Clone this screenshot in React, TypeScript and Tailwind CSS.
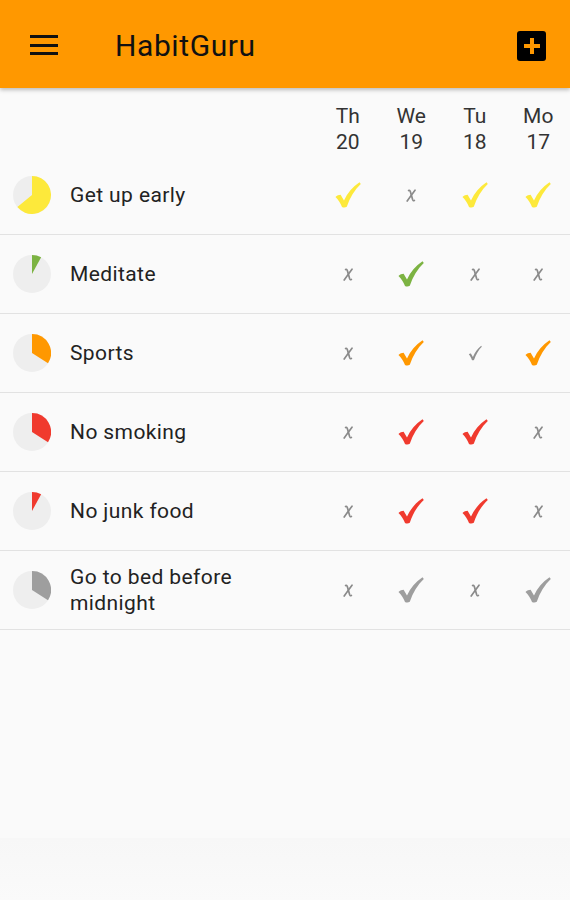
import React from "react";

type Mark = "big" | "x" | "small";

interface Habit {
  name: string;
  color: string;
  frac: number;
  marks: Mark[];
}

const habits: Habit[] = [
  { name: "Get up early", color: "#fde93b", frac: 0.64, marks: ["big", "x", "big", "big"] },
  { name: "Meditate", color: "#7cb342", frac: 0.08, marks: ["x", "big", "x", "x"] },
  { name: "Sports", color: "#ff9800", frac: 0.34, marks: ["x", "big", "small", "big"] },
  { name: "No smoking", color: "#f03a2e", frac: 0.34, marks: ["x", "big", "big", "x"] },
  { name: "No junk food", color: "#f03a2e", frac: 0.08, marks: ["x", "big", "big", "x"] },
  { name: "Go to bed before midnight", color: "#9e9e9e", frac: 0.34, marks: ["x", "big", "x", "big"] },
];

const days = [
  ["Th", "20"],
  ["We", "19"],
  ["Tu", "18"],
  ["Mo", "17"],
];

function Pie({ color, frac }: { color: string; frac: number }) {
  const r = 19;
  const cx = 19;
  const cy = 19;
  const a = frac * 2 * Math.PI;
  const x = cx + r * Math.sin(a);
  const y = cy - r * Math.cos(a);
  const large = frac > 0.5 ? 1 : 0;
  const d = `M${cx} ${cy} L${cx} ${cy - r} A${r} ${r} 0 ${large} 1 ${x} ${y} Z`;
  return (
    <svg width="38" height="38" viewBox="0 0 38 38" className="shrink-0">
      <circle cx={cx} cy={cy} r={r} fill="#eeeeee" />
      <path d={d} fill={color} />
    </svg>
  );
}

function BigCheck({ color }: { color: string }) {
  return (
    <svg width="26" height="26" viewBox="0 0 26 26">
      <path
        d="M0.5 15 C2 13.5 3.8 12.8 5.6 12.8 L9 18.5 C12.5 11 17.5 5 24.5 0.3 L25.8 2 C19.5 8 14.8 15.5 11.8 24.8 C10.3 25.8 8.4 25.8 7 25 C5.5 21 3.5 18 0.5 15 Z"
        fill={color}
      />
    </svg>
  );
}

function SmallCheck() {
  return (
    <svg width="14" height="16" viewBox="0 0 14 16">
      <path
        d="M0.8 9.3 C1.5 8.7 2.2 8.5 2.9 8.6 L4.9 12 C7 7.2 9.8 3.4 13.2 0.8 L13.8 1.8 C10.6 4.8 8 9.5 6 15 C5.3 15.4 4.5 15.4 3.9 15 C3.1 12.8 2.2 11 0.8 9.3 Z"
        fill="#8f8f8f"
      />
    </svg>
  );
}

function XMark() {
  return (
    <svg width="10" height="13" viewBox="0 0 10 13">
      <path d="M9 1.2 C6.5 4.5 4 8 1.2 12" stroke="#8a8a8a" strokeWidth="1.7" fill="none" strokeLinecap="round" />
      <path d="M2.6 1.5 C3.3 1.1 4 1.5 4.4 2.8 L6.6 10.6 C7 11.8 7.6 12 8.4 11.4" stroke="#8a8a8a" strokeWidth="1.7" fill="none" strokeLinecap="round" />
    </svg>
  );
}

function Cell({ mark, color }: { mark: Mark; color: string }) {
  return (
    <div className="w-[63.5px] shrink-0 flex items-center justify-center">
      {mark === "big" && <BigCheck color={color} />}
      {mark === "x" && <XMark />}
      {mark === "small" && <SmallCheck />}
    </div>
  );
}

export default function App() {
  return (
    <div
      className="w-[570px] h-[900px] bg-[#fafafa] flex flex-col overflow-hidden"
      style={{ fontFamily: "Roboto, 'Liberation Sans', sans-serif" }}
    >
      <header className="h-[88px] bg-[#ff9800] flex items-center shadow-[0_2px_4px_rgba(0,0,0,0.25)] relative z-10 shrink-0">
        <div className="w-[115px] flex items-center pl-[30px]">
          <div className="flex flex-col gap-[5.5px] mt-[2px]">
            <div className="w-[28px] h-[3px] bg-[#111]" />
            <div className="w-[28px] h-[3px] bg-[#111]" />
            <div className="w-[28px] h-[3px] bg-[#111]" />
          </div>
        </div>
        <div className="flex-1 text-[30px] tracking-[0.6px] text-[#111] leading-none mt-[4px]">HabitGuru</div>
        <div className="mr-[24px] mt-[3px] w-[29px] h-[30px] bg-black rounded-[3px] flex items-center justify-center relative">
          <div className="absolute w-[16px] h-[4px] bg-[#ff9800]" />
          <div className="absolute w-[4px] h-[16px] bg-[#ff9800]" />
        </div>
      </header>

      <div className="flex pt-[15px] h-[68px] shrink-0">
        <div className="flex-1" />
        {days.map(([d, n]) => (
          <div key={d} className="w-[63.5px] flex flex-col items-center text-[21px] leading-[26px] text-[#333]">
            <span>{d}</span>
            <span>{n}</span>
          </div>
        ))}
      </div>

      <div className="flex flex-col">
        {habits.map((h) => (
          <div key={h.name} className="flex h-[79px] border-b border-[#e2e2e2]">
            <div className="flex-1 flex items-center min-w-0">
              <div className="pl-[13px] w-[70px] shrink-0 flex items-center">
                <Pie color={h.color} frac={h.frac} />
              </div>
              <div className="text-[21px] tracking-[0.4px] leading-[26px] text-[#222] pr-[8px]">{h.name}</div>
            </div>
            {h.marks.map((m, i) => (
              <Cell key={i} mark={m} color={h.color} />
            ))}
          </div>
        ))}
      </div>

      <div className="flex-1" />
      <div className="h-[62px] bg-gradient-to-b from-[#f7f7f7] to-[#fafafa] shrink-0" />
    </div>
  );
}
